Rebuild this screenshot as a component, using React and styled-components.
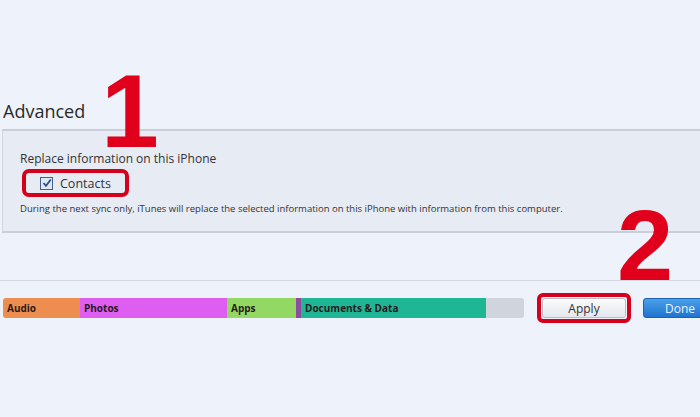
import React from 'react'
import styled, { createGlobalStyle } from 'styled-components'

const Global = createGlobalStyle`
    html, body {
        margin: 0;
        padding: 0;
        background: #eef2fa;
        font-family: "Open Sans", "Liberation Sans", sans-serif;
        overflow: hidden;
    }
`;

const Page = styled.div`
    position: relative;
    width: 700px;
    height: 417px;
    background: #eef2fa;
    padding-top: 99px;
    box-sizing: border-box;
    overflow: hidden;
`;

const Heading = styled.h2`
    margin: 0 0 6px 3px;
    font-size: 18px;
    font-weight: 400;
    color: #2a2a2a;
    line-height: 24px;
`;

const Panel = styled.section`
    margin-left: 2px;
    height: 104px;
    background: #e7ebf3;
    border-top: 2px solid #c9ced8;
    border-left: 1px solid #d2d6de;
    border-bottom: 2px solid #c9ced8;
    padding: 20px 0 0 17px;
    box-sizing: border-box;
`;

const Label = styled.div`
    font-size: 12px;
    color: #333;
    line-height: 16px;
`;

const CheckRow = styled.label`
    display: flex;
    width: fit-content;
    align-items: center;
    gap: 7px;
    margin: 2px 0 5px 2px;
    padding: 0 14px 0 14px;
    border: 4px solid #d6001c;
    border-radius: 7px;
    font-size: 12.5px;
    color: #333;
    height: 20px;
`;

const Box = styled.span`
    width: 11px;
    height: 11px;
    border: 1px solid #44608c;
    background: #dfe7f5;
    display: flex;
    align-items: center;
    justify-content: center;
`;

const Note = styled.div`
    font-size: 9.5px;
    color: #333;
    line-height: 14px;
`;

const Divider = styled.div`
    margin-top: 47px;
    height: 1px;
    background: #d3d8e0;
`;

const Footer = styled.div`
    display: flex;
    align-items: center;
    margin-top: 12px;
    padding-left: 3px;
`;

const Bar = styled.div`
    display: flex;
    flex-shrink: 0;
    width: 521px;
    height: 20px;
    border-radius: 3px;
    overflow: hidden;
`;

const Segment = styled.div`
    width: ${p => p.w}px;
    background: ${p => p.color};
    font-size: 10px;
    font-weight: 700;
    color: #2a1a20;
    display: flex;
    align-items: center;
    padding-left: ${p => (p.label ? 4 : 0)}px;
    box-sizing: border-box;
    white-space: nowrap;
`;

const ApplyWrap = styled.div`
    flex-shrink: 0;
    margin-left: 13px;
    border: 4px solid #d6001c;
    border-radius: 6px;
    padding: 1px;
`;

const Button = styled.div`
    flex-shrink: 0;
    width: ${p => p.w}px;
    margin-left: ${p => p.gap || 0}px;
    height: 18px;
    border-radius: 3px;
    font-size: 12px;
    display: flex;
    align-items: center;
    justify-content: center;
    color: ${p => (p.primary ? '#e8f2ff' : '#333')};
    background: ${p => (p.primary
        ? 'linear-gradient(#4aa0ea, #1f74cf)'
        : 'linear-gradient(#fafbfd, #e4e7ec)')};
    border: 1px solid ${p => (p.primary ? '#1b62b4' : '#b8bec8')};
`;

const Numeral = styled.div`
    position: absolute;
    left: ${p => p.x}px;
    top: ${p => p.y}px;
    font-family: "Liberation Sans", Arial, sans-serif;
    font-weight: 700;
    font-size: ${p => p.size}px;
    line-height: 1;
    color: #e0001b;
`;

export default function App() {
    return (
        <Page>
            <Global />
            <Heading>Advanced</Heading>
            <Panel>
                <Label>Replace information on this iPhone</Label>
                <CheckRow>
                    <Box>
                        <svg width="10" height="10" viewBox="0 0 10 10">
                            <path d="M1.5 5 L4 7.8 L8.8 1.5" fill="none" stroke="#2a4f8a" strokeWidth="1.8" />
                        </svg>
                    </Box>
                    Contacts
                </CheckRow>
                <Note>During the next sync only, iTunes will replace the selected information on this iPhone with information from this computer.</Note>
            </Panel>
            <Divider />
            <Footer>
                <Bar>
                    <Segment w={77} color="#ee8d50" label>Audio</Segment>
                    <Segment w={147} color="#dd5ef0" label>Photos</Segment>
                    <Segment w={69} color="#93d862" label>Apps</Segment>
                    <Segment w={5} color="#8e4c9e" />
                    <Segment w={185} color="#1fb695" label>Documents &amp; Data</Segment>
                    <Segment w={38} color="#d0d4dc" />
                </Bar>
                <ApplyWrap>
                    <Button w={82}>Apply</Button>
                </ApplyWrap>
                <Button primary w={72} gap={12}>Done</Button>
            </Footer>
            <Numeral x={101} y={59} size={104}>1</Numeral>
            <Numeral x={617} y={195} size={101}>2</Numeral>
        </Page>
    )
}
